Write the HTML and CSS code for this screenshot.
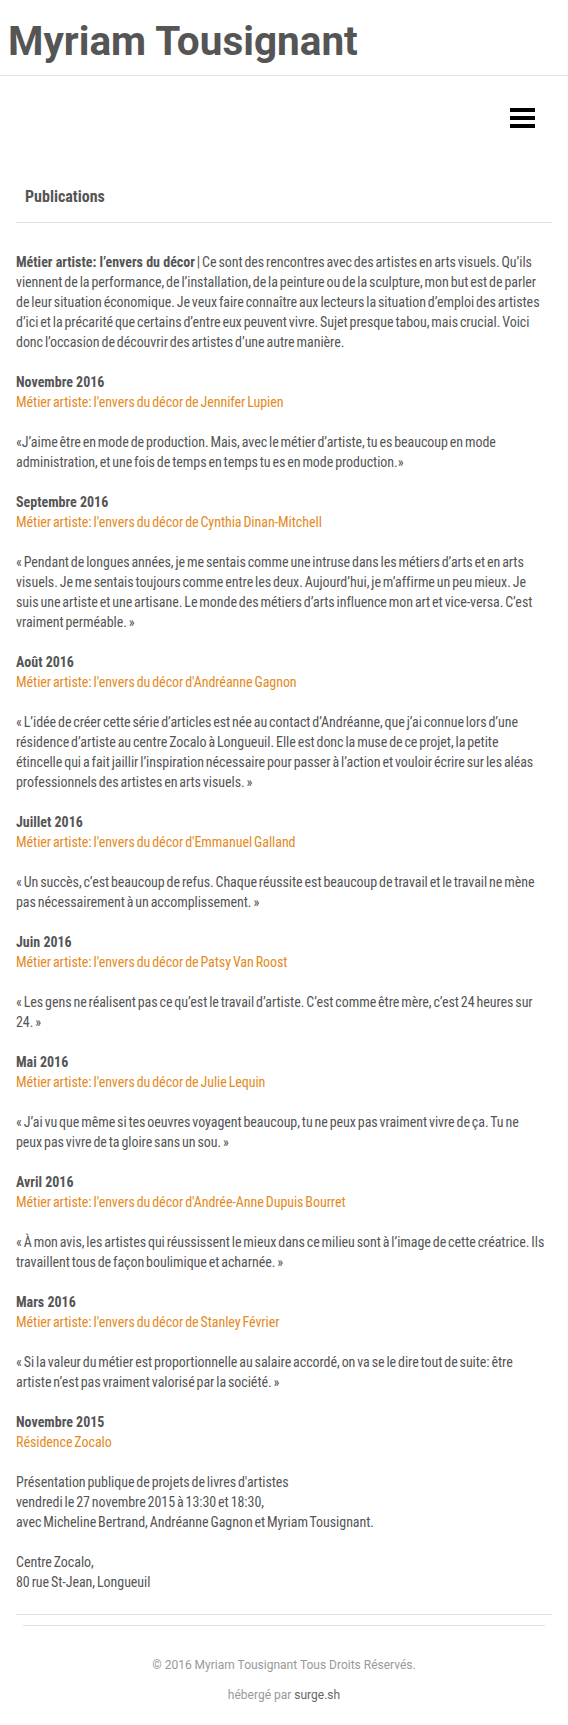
FILE: index.html
```html
<!DOCTYPE html>
<html lang="fr">
<head>
<meta charset="utf-8">
<title>Myriam Tousignant</title>
<link rel="stylesheet" href="styles.css">
</head>
<body>
<header class="site-header">
  <h1 class="site-title">Myriam Tousignant</h1>
</header>
<div class="page">
  <nav class="nav">
    <div class="burger" aria-label="menu"><span></span><span></span><span></span></div>
  </nav>
  <h2 class="section-title">Publications</h2>
  <article class="content">
    <p><strong>Métier artiste: l’envers du décor</strong> | Ce sont des rencontres avec des artistes en arts visuels. Qu’ils viennent de la performance, de l’installation, de la peinture ou de la sculpture, mon but est de parler de leur situation économique. Je veux faire connaître aux lecteurs la situation d’emploi des artistes d’ici et la précarité que certains d’entre eux peuvent vivre. Sujet presque tabou, mais crucial. Voici donc l’occasion de découvrir des artistes d’une autre manière.</p>

    <p><strong>Novembre 2016</strong><br><a href="#">Métier artiste: l'envers du décor de Jennifer Lupien</a></p>
    <p>«J’aime être en mode de production. Mais, avec le métier d’artiste, tu es beaucoup en mode administration, et une fois de temps en temps tu es en mode production.»</p>

    <p><strong>Septembre 2016</strong><br><a href="#">Métier artiste: l'envers du décor de Cynthia Dinan-Mitchell</a></p>
    <p>« Pendant de longues années, je me sentais comme une intruse dans les métiers d’arts et en arts visuels. Je me sentais toujours comme entre les deux. Aujourd’hui, je m’affirme un peu mieux. Je suis une artiste et une artisane. Le monde des métiers d’arts influence mon art et vice-versa. C’est vraiment perméable. »</p>

    <p><strong>Août 2016</strong><br><a href="#">Métier artiste: l'envers du décor d'Andréanne Gagnon</a></p>
    <p>« L’idée de créer cette série d’articles est née au contact d’Andréanne, que j’ai connue lors d’une résidence d’artiste au centre Zocalo à Longueuil. Elle est donc la muse de ce projet, la petite étincelle qui a fait jaillir l’inspiration nécessaire pour passer à l’action et vouloir écrire sur les aléas professionnels des artistes en arts visuels. »</p>

    <p><strong>Juillet 2016</strong><br><a href="#">Métier artiste: l'envers du décor d'Emmanuel Galland</a></p>
    <p>« Un succès, c’est beaucoup de refus. Chaque réussite est beaucoup de travail et le travail ne mène pas nécessairement à un accomplissement. »</p>

    <p><strong>Juin 2016</strong><br><a href="#">Métier artiste: l'envers du décor de Patsy Van Roost</a></p>
    <p>« Les gens ne réalisent pas ce qu’est le travail d’artiste. C’est comme être mère, c’est 24 heures sur 24. »</p>

    <p><strong>Mai 2016</strong><br><a href="#">Métier artiste: l'envers du décor de Julie Lequin</a></p>
    <p>« J’ai vu que même si tes oeuvres voyagent beaucoup, tu ne peux pas vraiment vivre de ça. Tu ne peux pas vivre de ta gloire sans un sou. »</p>

    <p><strong>Avril 2016</strong><br><a href="#">Métier artiste: l'envers du décor d'Andrée-Anne Dupuis Bourret</a></p>
    <p>« À mon avis, les artistes qui réussissent le mieux dans ce milieu sont à l’image de cette créatrice. Ils travaillent tous de façon boulimique et acharnée. »</p>

    <p><strong>Mars 2016</strong><br><a href="#">Métier artiste: l'envers du décor de Stanley Février</a></p>
    <p>« Si la valeur du métier est proportionnelle au salaire accordé, on va se le dire tout de suite: être artiste n’est pas vraiment valorisé par la société. »</p>

    <p><strong>Novembre 2015</strong><br><a href="#">Résidence Zocalo</a></p>
    <p>Présentation publique de projets de livres d'artistes<br>vendredi le 27 novembre 2015 à 13:30 et 18:30,<br>avec Micheline Bertrand, Andréanne Gagnon et Myriam Tousignant.</p>
    <p>Centre Zocalo,<br>80 rue St-Jean, Longueuil</p>
  </article>
  <footer class="footer">
    <p class="copy">© 2016 Myriam Tousignant Tous Droits Réservés.</p>
    <p class="host">hébergé par <a href="#">surge.sh</a></p>
  </footer>
</div>
</body>
</html>
```
FILE: styles.css
```css
html, body {
  margin: 0;
  padding: 0;
  background: #fff;
}

body {
  font-family: "Roboto Condensed", "Roboto", "Liberation Sans", sans-serif;
  color: #555;
}

.site-header {
  padding: 17px 8px 10px;
  border-bottom: 1px solid #e1e1e1;
}

.site-title {
  margin: 0;
  font-family: "Roboto", "Liberation Sans", sans-serif;
  font-weight: 700;
  font-size: 40.5px;
  line-height: 48px;
  color: #555;
}

.page {
  padding: 0 16px;
}

.nav {
  display: flex;
  justify-content: flex-end;
  padding: 32px 17px 59px 0;
}

.burger {
  display: flex;
  flex-direction: column;
  gap: 4px;
  width: 25px;
}

.burger span {
  display: block;
  height: 4px;
  background: #000;
}

.section-title {
  margin: 0;
  padding: 0 0 15px 9px;
  font-size: 16px;
  line-height: 20px;
  font-weight: 700;
  color: #555;
  border-bottom: 1px solid #e1e1e1;
}

.content {
  margin-top: 29px;
  padding-bottom: 22px;
  border-bottom: 1px solid #e1e1e1;
  font-size: 14px;
  line-height: 20px;
  word-spacing: -1.25px;
  letter-spacing: -0.05px;
}

.content p {
  max-width: 529.5px;
  margin: 0 0 20px;
}

.content p:last-child {
  margin-bottom: 0;
}

.content strong {
  font-weight: 700;
  word-spacing: 0;
  letter-spacing: 0;
}

.content a {
  color: #e38a22;
  text-decoration: none;
}

.footer {
  margin: 10px 7px 0;
  border-top: 1px solid #e1e1e1;
  padding: 29px 0 20px;
  text-align: center;
  font-family: "Roboto", "Liberation Sans", sans-serif;
  font-size: 12px;
  line-height: 20px;
  color: #999;
}

.footer p {
  margin: 0 0 10px;
}

.footer a {
  color: #666;
  text-decoration: none;
}
```
